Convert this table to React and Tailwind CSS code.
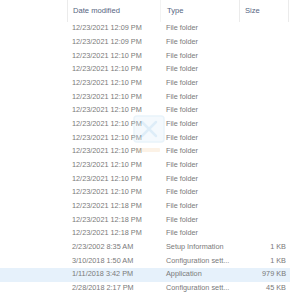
import React from "react";

const rows = [
  ["12/23/2021 12:09 PM", "File folder", ""],
  ["12/23/2021 12:09 PM", "File folder", ""],
  ...Array.from({ length: 11 }, () => ["12/23/2021 12:10 PM", "File folder", ""]),
  ["12/23/2021 12:18 PM", "File folder", ""],
  ["12/23/2021 12:18 PM", "File folder", ""],
  ["12/23/2021 12:18 PM", "File folder", ""],
  ["2/23/2002 8:35 AM", "Setup Information", "1 KB"],
  ["3/10/2018 1:50 AM", "Configuration sett...", "1 KB"],
  ["1/11/2018 3:42 PM", "Application", "979 KB", true],
  ["2/28/2018 2:17 PM", "Configuration sett...", "45 KB"],
];

const App = () => {
  return (
    <div className="relative w-[300px] h-[300px] overflow-hidden bg-white font-['Liberation_Sans',sans-serif] text-[7.3px]">
      {/* Column headers */}
      <div className="flex h-[22px] items-center text-[7.6px] text-[#55657f]">
        <div className="w-[67px] h-full"></div>
        <div className="w-[93px] h-full flex items-center pl-[5px] border-l border-[#ebebeb]">Date modified</div>
        <div className="w-[79px] h-full flex items-center pl-[6px] border-l border-[#f3f3f3]">Type</div>
        <div className="w-[50px] h-full flex items-center pl-[5px] border-l border-[#ebebeb] border-r">Size</div>
      </div>

      {/* File rows */}
      <div className="flex flex-col text-[#7a7a7a]">
        {rows.map(([date, type, size, selected], i) => (
          <div
            key={i}
            className={`flex h-[13.68px] items-center w-[290px] ${selected ? "bg-[#e6f1fb]" : ""}`}
          >
            <div className="w-[67px]"></div>
            <div className="w-[93px] pl-[5px] whitespace-nowrap">{date}</div>
            <div className="w-[79px] pl-[6px] whitespace-nowrap">{type}</div>
            <div className="w-[50px] pr-[3px] text-right whitespace-nowrap">{size}</div>
          </div>
        ))}
      </div>

      {/* Faint watermark */}
      <svg
        className="absolute left-[130px] top-[112px] opacity-25 pointer-events-none"
        width="40"
        height="48"
        viewBox="0 0 40 48"
      >
        <rect x="4" y="4" width="30" height="26" rx="3" fill="#d7ebf8" stroke="#a9d2ee" strokeWidth="1.5" />
        <path d="M12 10 L26 24 M26 10 L12 24" stroke="#7fbce6" strokeWidth="2.5" strokeLinecap="round" />
        <rect x="6" y="36" width="24" height="4" rx="1" fill="#f5cfa0" />
      </svg>
    </div>
  );
};

export default App;
